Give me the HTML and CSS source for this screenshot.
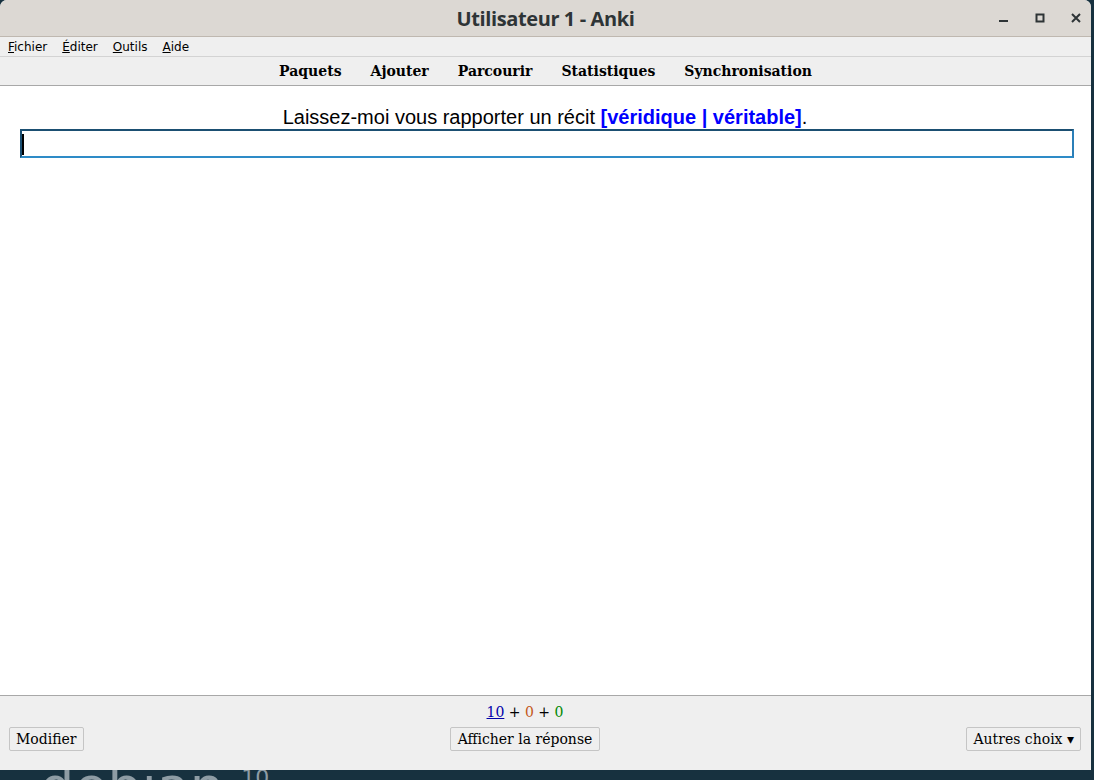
FILE: index.html
```html
<!DOCTYPE html>
<html lang="fr">
<head>
    <meta charset="UTF-8">
    <title>Utilisateur 1 - Anki</title>
    <link rel="stylesheet" href="styles.css">
</head>
<body>
    <div class="desktop">
        <div class="window">
            <div class="titlebar">
                <div class="title">Utilisateur 1 - Anki</div>
                <div class="controls">
                    <span class="ctl">
                        <svg width="12" height="12" viewBox="0 0 12 12"><rect x="1" y="8" width="9" height="2" fill="#2e3436"/></svg>
                    </span>
                    <span class="ctl">
                        <svg width="12" height="12" viewBox="0 0 12 12"><rect x="2.5" y="2.5" width="7" height="7" fill="none" stroke="#2e3436" stroke-width="2"/></svg>
                    </span>
                    <span class="ctl">
                        <svg width="12" height="12" viewBox="0 0 12 12"><path d="M2 2 L10 10 M10 2 L2 10" stroke="#2e3436" stroke-width="2"/></svg>
                    </span>
                </div>
            </div>

            <div class="menubar">
                <span class="menu"><u>F</u>ichier</span>
                <span class="menu"><u>É</u>diter</span>
                <span class="menu"><u>O</u>utils</span>
                <span class="menu"><u>A</u>ide</span>
            </div>

            <div class="toolbar">
                <a class="tb-link">Paquets</a>
                <a class="tb-link">Ajouter</a>
                <a class="tb-link">Parcourir</a>
                <a class="tb-link">Statistiques</a>
                <a class="tb-link">Synchronisation</a>
            </div>

            <div class="reviewer">
                <div class="question">
                    Laissez-moi vous rapporter un récit <span class="cloze">[véridique | véritable]</span>.
                </div>
                <div class="typeans"><span class="caret"></span></div>
            </div>

            <div class="bottombar">
                <div class="counts">
                    <u class="c-new">10</u> + <span class="c-learn">0</span> + <span class="c-review">0</span>
                </div>
                <div class="btn-row">
                    <button class="btn btn-edit">Modifier</button>
                    <button class="btn">Afficher la réponse</button>
                    <button class="btn btn-more">Autres choix ▾</button>
                </div>
            </div>
        </div>
        <!-- fond d'écran, seul le haut du logo dépasse -->
        <div class="wallpaper">
            <div class="logo">debian <span class="ver">10</span></div>
        </div>
    </div>
</body>
</html>
```

FILE: styles.css
```css
* {
    margin: 0;
    padding: 0;
    box-sizing: border-box;
}

body {
    width: 1094px;
    height: 780px;
    overflow: hidden;
    background: #17313f;
}

.desktop {
    width: 1094px;
    height: 780px;
    background: #17313f;
    overflow: hidden;
}

.window {
    width: 1091px;
    height: 770px;
    display: flex;
    flex-direction: column;
    background: #efefef;
    border-radius: 7px 7px 0 0;
    overflow: hidden;
}

.titlebar {
    height: 37px;
    background: #dcd8d3;
    border-bottom: 1px solid #bfb8b0;
    display: flex;
    align-items: center;
    justify-content: center;
    position: relative;
}

.title {
    font-family: "Open Sans", "DejaVu Sans", sans-serif;
    font-weight: 700;
    font-size: 20px;
    color: #2e3436;
    letter-spacing: -0.4px;
}

.controls {
    position: absolute;
    right: 8px;
    top: 11px;
    display: flex;
    gap: 22px;
}

.ctl {
    width: 14px;
    height: 14px;
    display: flex;
    align-items: center;
    justify-content: center;
}

.menubar {
    height: 20px;
    background: #efefef;
    border-bottom: 1px solid #d3d3d3;
    display: flex;
    align-items: center;
    padding-left: 8px;
    gap: 15px;
    font-family: "DejaVu Sans", sans-serif;
    font-size: 12px;
    color: #000;
}

.toolbar {
    height: 29px;
    background: #efefef;
    border-bottom: 1px solid #a8a8a8;
    display: flex;
    align-items: center;
    justify-content: center;
    gap: 29px;
}

.tb-link {
    font-family: "DejaVu Serif", serif;
    font-weight: bold;
    font-size: 14px;
    color: #000;
}

.reviewer {
    flex: 1;
    background: #fff;
    padding: 18px 17px 0 20px;
}

.question {
    font-family: "Liberation Sans", Arial, sans-serif;
    font-size: 20px;
    color: #000;
    text-align: center;
    line-height: 24px;
    padding-top: 1px;
    padding-right: 4px;
}

.cloze {
    color: #0000ff;
    font-weight: bold;
}

.typeans {
    height: 29px;
    border: 2px solid;
    border-color: #1b4f72 #2b7fb8 #2e8bc7 #1b4f72;
    background: #fff;
    padding: 3px 0;
}

.caret {
    display: block;
    width: 2px;
    height: 21px;
    background: #000;
}

.bottombar {
    height: 75px;
    border-top: 1px solid #a8a8a8;
    background: #efefef;
    padding: 7px 10px 0 9px;
}

.counts {
    text-align: center;
    font-family: "DejaVu Serif", serif;
    font-size: 14px;
    line-height: 18px;
    color: #000;
    padding-right: 40px;
}

.c-new {
    color: #00a;
}

.c-learn {
    color: #c35617;
}

.c-review {
    color: #080;
}

.btn-row {
    margin-top: 6px;
    display: flex;
    justify-content: space-between;
    align-items: center;
}

.btn {
    font-family: "DejaVu Serif", serif;
    font-size: 14px;
    color: #000;
    background: #efefef;
    border: 1px solid #c5c5c5;
    border-radius: 2px;
    height: 24px;
    padding: 0 7px;
}

.btn-edit {
    padding: 0 6px;
}

.btn-more {
    padding: 0 6px;
}

.wallpaper {
    height: 10px;
    overflow: hidden;
    padding: 3px 0 0 40px;
}

.logo {
    font-family: "DejaVu Sans", sans-serif;
    font-size: 54px;
    line-height: 10px;
    color: #8e9ca4;
    white-space: nowrap;
}

.ver {
    font-size: 22px;
    line-height: 10px;
    vertical-align: 20px;
}
```
